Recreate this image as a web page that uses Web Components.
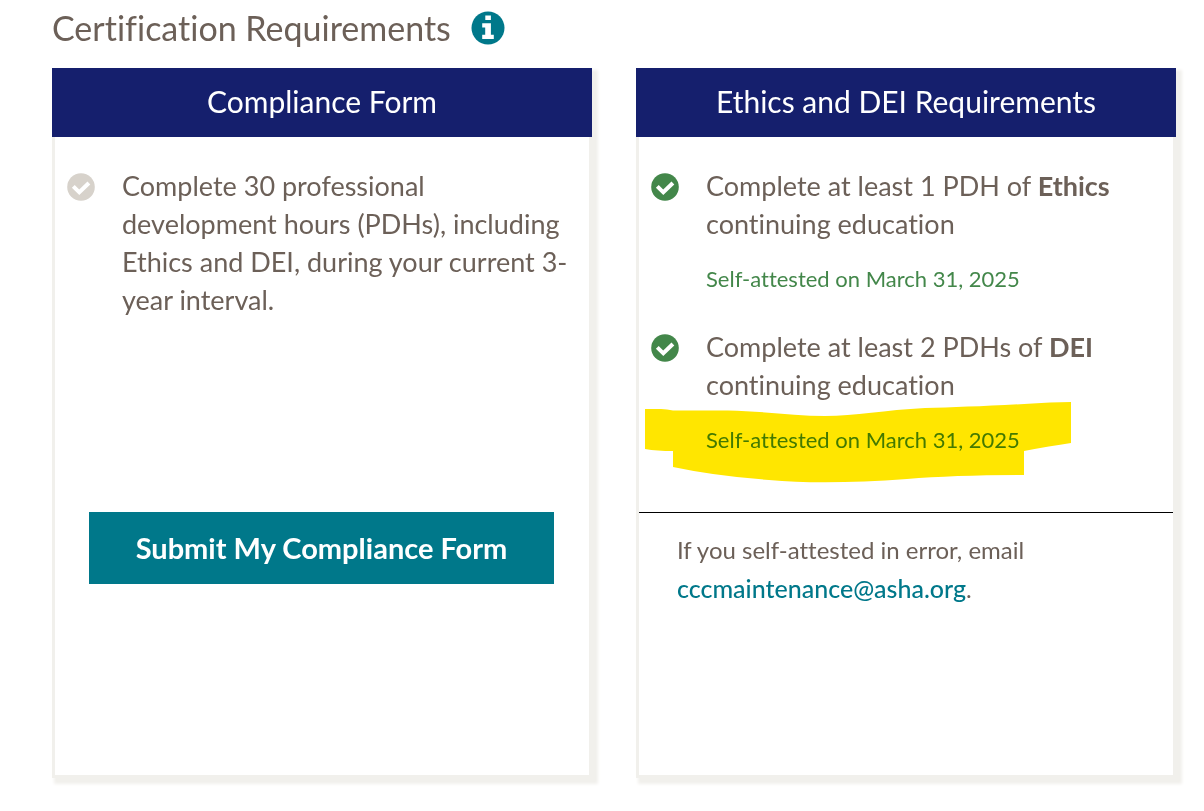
<!DOCTYPE html>
<html lang="en">
<head>
<meta charset="utf-8">
<meta name="viewport" content="width=device-width, initial-scale=1">
<title>Certification Requirements</title>
<style>
  body { margin: 0; background: #fff; color: #6c6058; font-family: Lato, "Open Sans", sans-serif; font-size: 27px; line-height: 38px; font-variant-ligatures: none; }
</style>
</head>
<body>
<cert-page>
  <span slot="title">Certification Requirements</span>
  <requirement-card>
    <span slot="title">Compliance Form</span>
    <requirement-item>Complete 30 professional development hours (PDHs), including Ethics and DEI, during your current 3-year interval.</requirement-item>
    <submit-button slot="footer">Submit My Compliance Form</submit-button>
  </requirement-card>
  <requirement-card>
    <span slot="title">Ethics and DEI Requirements</span>
    <requirement-item done>Complete at least 1 PDH of <b>Ethics</b> continuing education<span slot="status">Self-attested on March 31, 2025</span></requirement-item>
    <requirement-item done>Complete at least 2 PDHs of <b>DEI</b> continuing education<marker-highlight slot="status">Self-attested on March 31, 2025</marker-highlight></requirement-item>
    <contact-note slot="footer" email="cccmaintenance@asha.org">If you self-attested in error, email</contact-note>
  </requirement-card>
</cert-page>
<script>
class BaseElement extends HTMLElement {
  constructor() {
    super();
    this.attachShadow({ mode: 'open' }).innerHTML = this.constructor.markup;
  }
}

customElements.define('info-button', class extends BaseElement {
  static markup = `
    <style>
      :host { display: block; }
      button { display: block; padding: 0; border: 0; background: none; cursor: pointer; }
      svg { display: block; width: 34px; height: 34px; }
    </style>
    <button type="button" aria-label="More information">
      <svg viewBox="0 0 34 34" aria-hidden="true">
        <circle cx="17" cy="17" r="16.5" fill="#00788a"/>
        <path fill="#fff" d="M14.3 4.600h5.600v4.500h-5.600zM11.200 12.200h8.700v11.500h2.900v4.400H11.200v-4.400h3v-7.100h-3z"/>
      </svg>
    </button>`;
});

customElements.define('check-icon', class extends BaseElement {
  static markup = `
    <style>
      :host { display: block; width: 28px; height: 28px; }
      svg { display: block; width: 100%; height: 100%; }
    </style>
    <svg viewBox="0 0 28 28" aria-hidden="true">
      <circle cx="14" cy="14" r="13.8" fill="currentColor"/>
      <path d="M6.300 13.300l6 6 9.600-9.300" fill="none" stroke="#fff" stroke-width="4"/>
    </svg>`;
});

customElements.define('cert-page', class extends BaseElement {
  static markup = `
    <style>
      :host { display: flex; flex-direction: column; box-sizing: border-box; min-height: 100vh; padding: 6px 28px 33px 52px; }
      header { display: flex; align-items: center; gap: 20px; height: 44px; margin-bottom: 18px; }
      h1 { margin: 0; font-size: 34px; line-height: 44px; font-weight: 400; }
      main { flex: 1; display: grid; grid-template-columns: repeat(auto-fit, minmax(min(100%, 480px), 1fr)); gap: 44px; }
    </style>
    <header><h1><slot name="title"></slot></h1><info-button></info-button></header>
    <main><slot></slot></main>`;
});

customElements.define('requirement-card', class extends BaseElement {
  static markup = `
    <style>
      :host { display: flex; flex-direction: column; background: #fff; box-shadow: 4px 4px 3px 2px #f1f0ec; }
      h2 { margin: 0; padding: 14px 12px 17px; background: #151f6d; color: #fff; font-size: 30px; line-height: 38px; font-weight: 400; text-align: center; }
      .body { flex: 1; border: 3px solid #f1f0ec; border-top: 0; }
      .list { display: flex; flex-direction: column; gap: 30px; box-sizing: border-box; min-height: 375px; padding: 30px 12px; }
    </style>
    <h2><slot name="title"></slot></h2>
    <div class="body">
      <div class="list"><slot></slot></div>
      <slot name="footer"></slot>
    </div>`;
});

customElements.define('requirement-item', class extends BaseElement {
  static markup = `
    <style>
      :host { display: flex; align-items: flex-start; gap: 27px; }
      check-icon { flex: none; margin-top: 6px; color: #d7d2cb; }
      :host([done]) check-icon { color: #43874a; }
      .text { flex: 1; min-width: 0; }
      p { margin: 0; }
      ::slotted([slot="status"]) { display: block; margin-top: 17px; color: #43874a; font-size: 22px; }
    </style>
    <check-icon></check-icon>
    <div class="text"><p><slot></slot></p><slot name="status"></slot></div>`;
});

customElements.define('marker-highlight', class extends BaseElement {
  static markup = `
    <style>
      :host { display: block; position: relative; }
      svg { position: absolute; left: -61px; top: -19px; width: 426px; height: 81px; mix-blend-mode: multiply; pointer-events: none; }
    </style>
    <slot></slot>
    <svg viewBox="0 0 426 81" aria-hidden="true">
      <path fill="#ffe600" d="M0 7h16q6 0 12 1.500h55C116 9 150 14 180 14C210 14 240 8 280 6Q330 5 405 .5L426 0V41Q405 44 379 49V73Q310 73 262 77Q180 83 124 78Q70 74 28 65V49Q12 49 0 47z"/>
    </svg>`;
});

customElements.define('submit-button', class extends BaseElement {
  static markup = `
    <style>
      :host { display: block; padding: 0 35px 0 34px; }
      button { display: block; width: 100%; padding: 17px 12px; border: 0; background: #00788a; color: #fff; font: inherit; font-size: 29px; font-weight: 700; line-height: 38px; text-align: center; cursor: pointer; }
    </style>
    <button type="button"><slot></slot></button>`;
});

customElements.define('contact-note', class extends BaseElement {
  static markup = `
    <style>
      :host { display: block; padding: 18px 38px; border-top: 1px solid #000; font-size: 24px; }
      p { margin: 0; }
      a { display: inline-block; color: #00788a; font-size: 25px; font-weight: 500; text-decoration: none; }
    </style>
    <p><slot></slot><br><a></a>.</p>`;
  connectedCallback() {
    const email = this.getAttribute('email');
    const link = this.shadowRoot.querySelector('a');
    link.href = 'mailto:' + email;
    link.textContent = email;
  }
});
</script>
</body>
</html>
